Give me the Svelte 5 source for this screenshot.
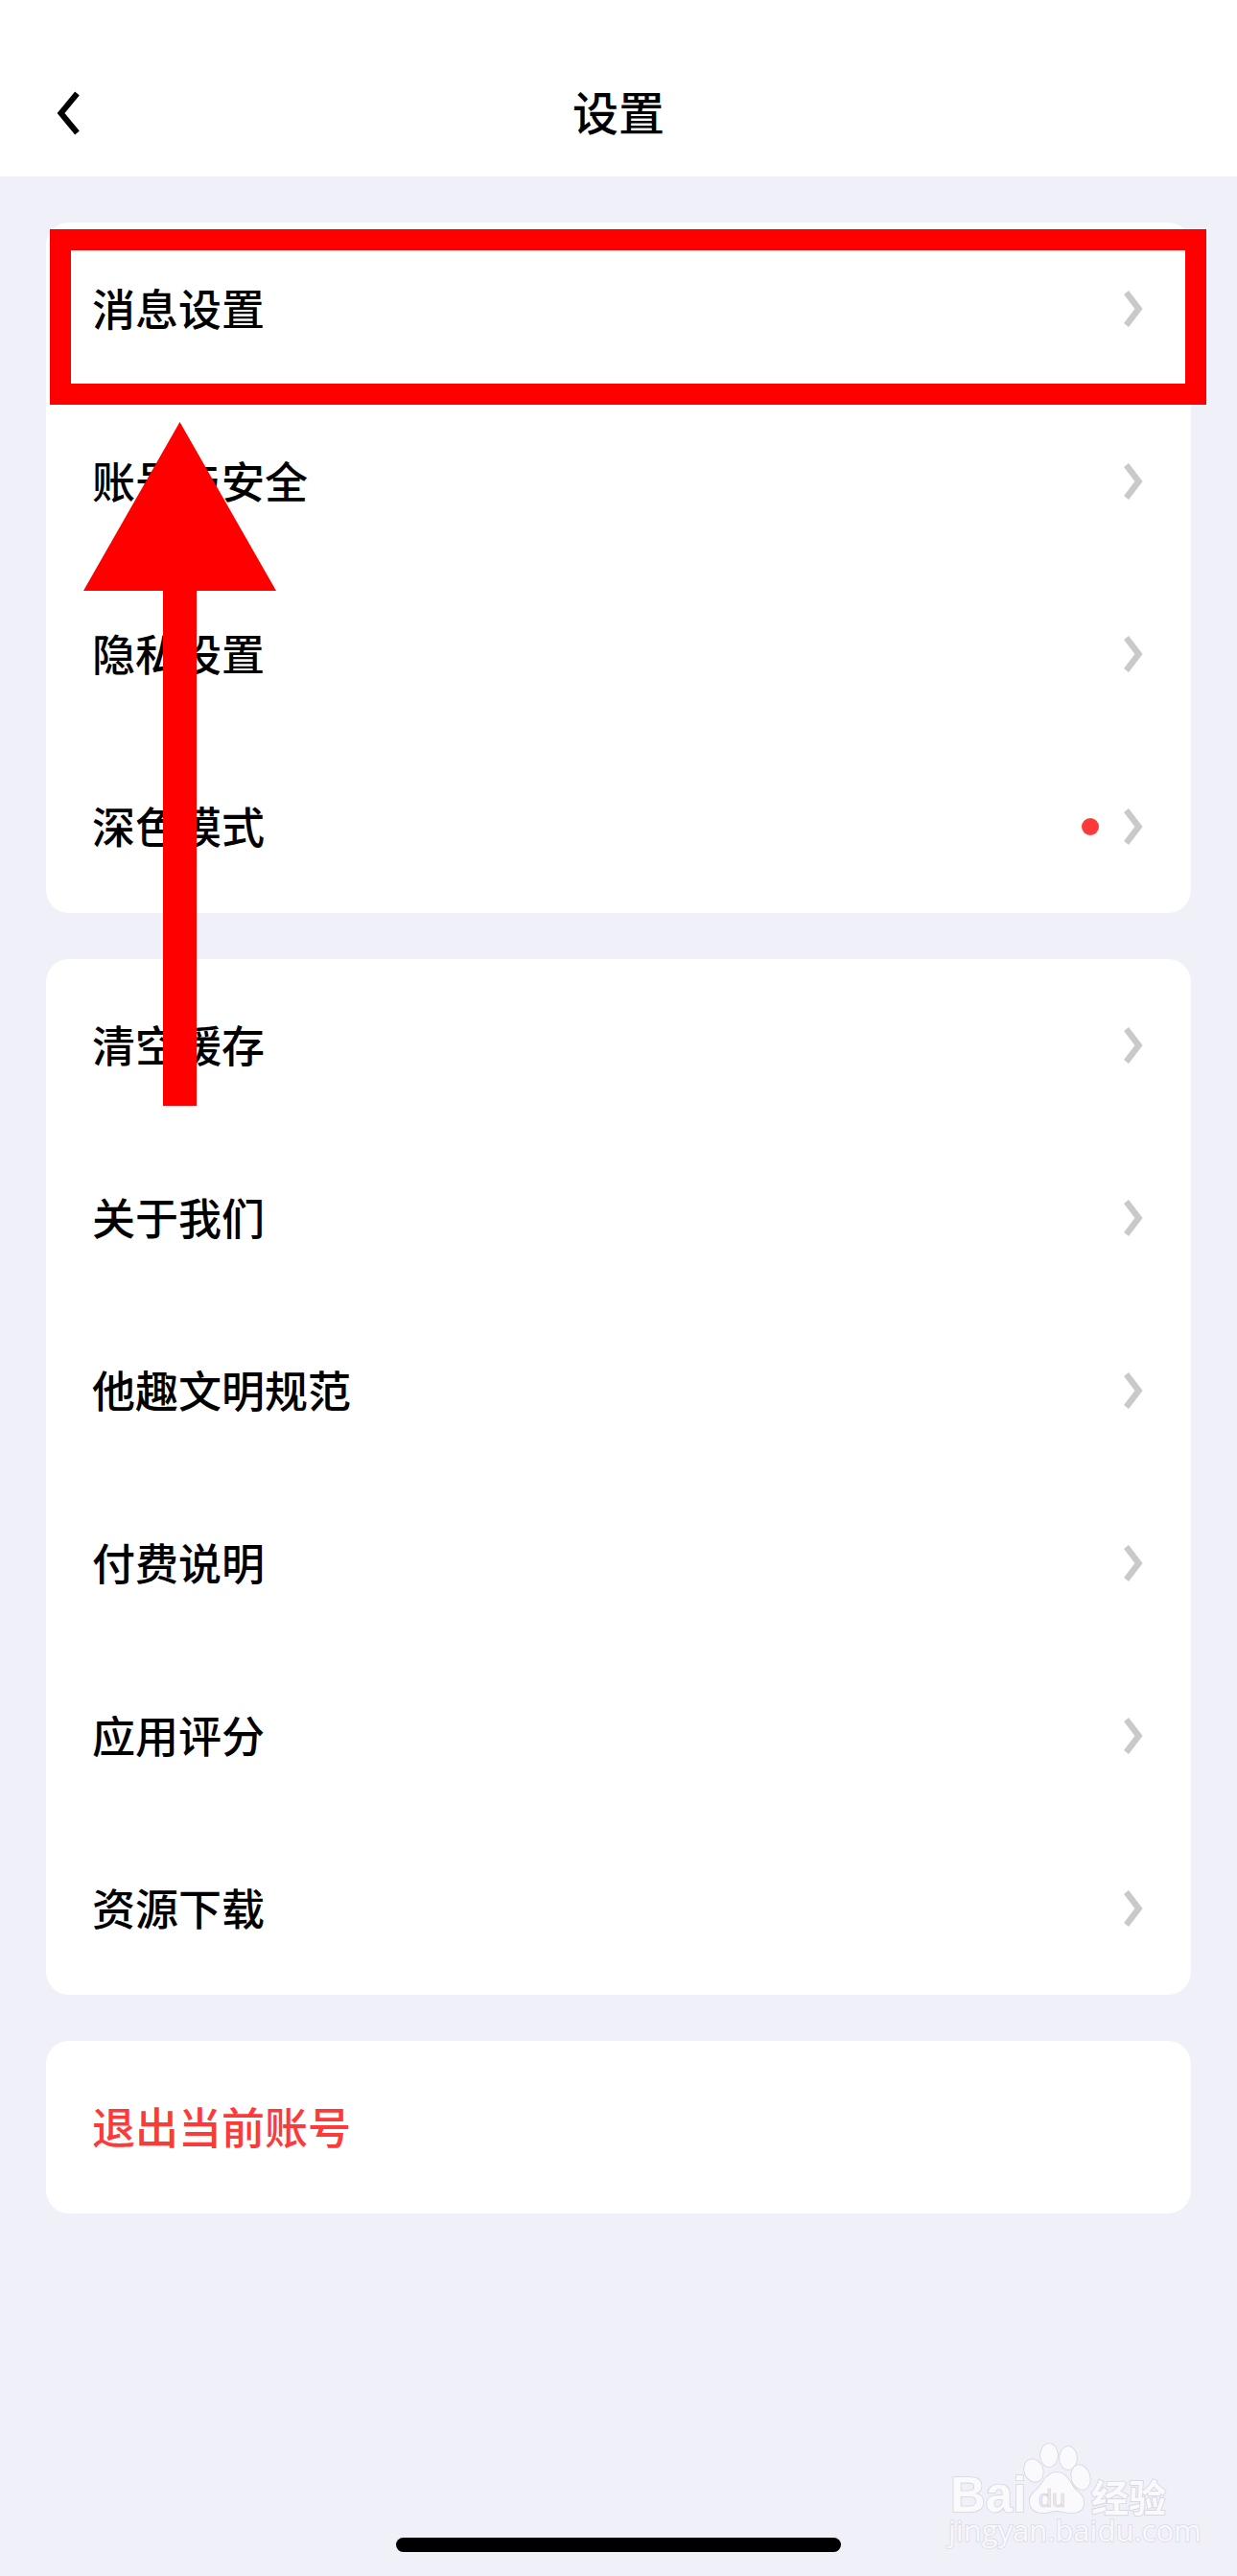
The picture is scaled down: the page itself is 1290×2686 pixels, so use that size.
<script>
  const groups = [
    [
      { label: '消息设置' },
      { label: '账号与安全' },
      { label: '隐私设置' },
      { label: '深色模式', dot: true }
    ],
    [
      { label: '清空缓存' },
      { label: '关于我们' },
      { label: '他趣文明规范' },
      { label: '付费说明' },
      { label: '应用评分' },
      { label: '资源下载' }
    ]
  ];
</script>

<div class="page">
  <header class="topbar">
    <button class="back" aria-label="返回">
      <svg width="30" height="50" viewBox="0 0 30 50">
        <path d="M24.5 4.5 L7.5 25 L24.5 45.5" fill="none" stroke="#000" stroke-width="6" />
      </svg>
    </button>
    <h1>设置</h1>
    <span></span>
  </header>

  <main class="content">
    {#each groups as rows}
      <section class="card">
        {#each rows as row}
          <div class="row">
            <span class="label">{row.label}</span>
            {#if row.dot}<span class="dot"></span>{/if}
            <svg class="chev" width="22" height="40" viewBox="0 0 22 40">
              <path d="M2.5 3 L15.5 20 L2.5 37" fill="none" stroke="#c9c9c9" stroke-width="6.5" />
            </svg>
          </div>
        {/each}
      </section>
    {/each}
    <section class="card">
      <div class="row"><span class="label logout">退出当前账号</span></div>
    </section>
  </main>

  <div class="home-bar"></div>

  <!-- annotation drawn over the screenshot -->
  <div class="mark-box"></div>
  <svg class="mark-arrow" width="201" height="713" viewBox="0 0 201 713">
    <path d="M100.5 0 L201 176 L118 176 L118 713 L83 713 L83 176 L0 176 Z" fill="#ff0000" />
  </svg>

  <svg class="watermark" width="340" height="206" viewBox="0 0 340 206">
    <g class="wm">
      <ellipse cx="128" cy="96" rx="9.5" ry="12" transform="rotate(-20 128 96)" />
      <ellipse cx="144" cy="80" rx="9" ry="12" />
      <ellipse cx="164" cy="83" rx="9" ry="12" />
      <ellipse cx="177" cy="103" rx="9.5" ry="13" transform="rotate(-15 177 103)" />
      <path d="M152 98 C164 98 166 112 174 118 C184 126 182 140 168 140 C160 140 156 138 152 138 C146 138 142 141 136 140 C122 139 120 124 130 117 C138 111 140 98 152 98 Z" />
      <text x="41" y="139" class="bai">Bai</text>
      <text x="188" y="139" class="cn">经验</text>
      <text x="39" y="170" class="url">jingyan.baidu.com</text>
    </g>
    <text x="133" y="134" class="du">du</text>
  </svg>
</div>

<style>
  :global(body) {
    margin: 0;
    background: #eff0f8;
  }
  .page {
    position: relative;
    width: 1290px;
    height: 2686px;
    overflow: hidden;
    background: #eff0f8;
    font-family: 'Noto Sans CJK SC', 'Noto Sans', sans-serif;
    color: #000;
  }
  .topbar {
    display: grid;
    grid-template-columns: 1fr auto 1fr;
    grid-template-rows: 68px;
    align-items: center;
    padding: 84px 48px 32px;
    background: #fff;
  }
  .topbar h1 {
    margin: 0 0 7px;
    font-size: 48px;
    line-height: 60px;
    font-weight: 500;
  }
  .back {
    justify-self: start;
    display: flex;
    padding: 0 0 0 8px;
    border: none;
    background: none;
  }
  .content {
    display: flex;
    flex-direction: column;
    gap: 48px;
    padding: 48px;
  }
  .card {
    background: #fff;
    border-radius: 24px;
  }
  .row {
    display: flex;
    align-items: center;
    height: 180px;
    padding: 0 48px;
  }
  .label {
    flex: 1;
    margin-bottom: 4px;
    font-size: 45px;
    font-weight: 500;
  }
  .logout {
    color: #fd3a3a;
  }
  .dot {
    width: 18px;
    height: 18px;
    margin-right: 26px;
    border-radius: 50%;
    background: #fd3a3a;
  }
  .chev {
    flex: none;
  }
  .home-bar {
    position: absolute;
    left: 413px;
    top: 2646px;
    width: 464px;
    height: 15px;
    border-radius: 8px;
    background: #000;
  }
  .mark-box {
    position: absolute;
    left: 52px;
    top: 239px;
    width: 1162px;
    height: 139px;
    border: 22px solid #ff0000;
  }
  .mark-arrow {
    position: absolute;
    left: 87px;
    top: 440px;
  }
  .watermark {
    position: absolute;
    left: 950px;
    top: 2480px;
  }
  .wm {
    fill: #fafafd;
    stroke: #d4d4de;
    stroke-width: 1.6;
    paint-order: stroke;
  }
  .bai {
    font: 700 51px 'Liberation Sans', sans-serif;
  }
  .cn {
    font: 700 39px 'Noto Sans CJK SC', sans-serif;
  }
  .url {
    font: 400 31px 'Open Sans', sans-serif;
    fill: #f8f8fc;
    stroke: #dadae4;
  }
  .du {
    font: 400 25px 'Liberation Sans', sans-serif;
    fill: #eff0f8;
    stroke: #cfcfd8;
    stroke-width: 0.7;
  }
</style>
